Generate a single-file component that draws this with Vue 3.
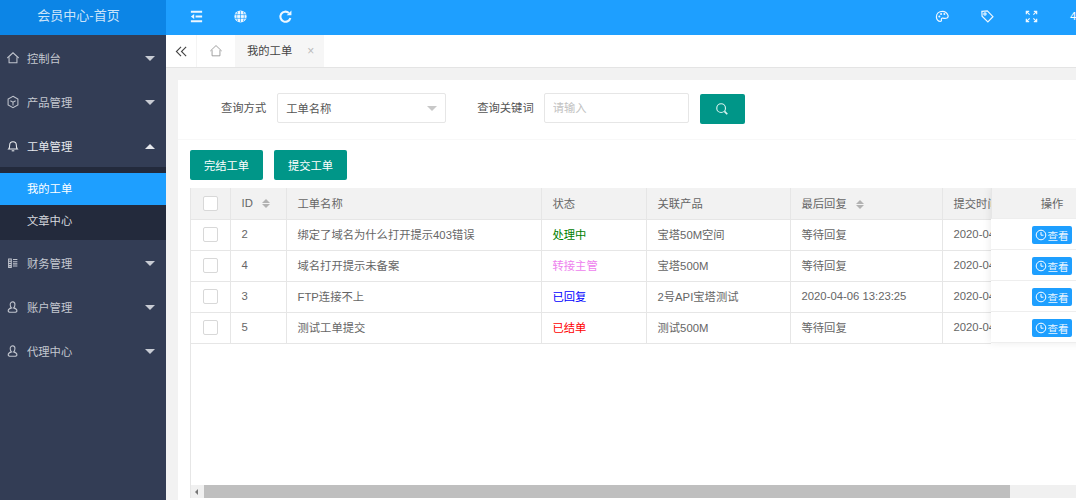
<template>
  <div class="app">
    <header class="topbar">
      <div class="logo">会员中心-首页</div>
      <div class="top-left">
        <span class="top-item">
          <svg class="top-icon" viewBox="0 0 16 16"><path d="M2 3h12M7 8h7M2 13h12" stroke-width="2.200" /><path d="M5.500 5.300 2 8l3.500 2.700z" class="solid" /></svg>
        </span>
        <span class="top-item">
          <svg class="top-icon" viewBox="0 0 16 16"><circle cx="8" cy="8" r="6.500" class="solid" /><path d="M2 6h12M2 10h12M8 2v12M5 3c-1.400 3-1.400 7 0 10M11 3c1.400 3 1.400 7 0 10" class="cut" /></svg>
        </span>
        <span class="top-item">
          <svg class="top-icon" viewBox="0 0 16 16"><path d="M13.200 9.500A5.400 5.400 0 1 1 11.600 4.200" stroke-width="2.200" /><path d="M9.300 6.700h5V1.700z" class="solid" /></svg>
        </span>
      </div>
      <div class="top-right">
        <span class="top-item">
          <svg class="top-icon" viewBox="0 0 16 16"><path d="M8 2.500C4 2.500 1.500 5.200 1.500 8.500c0 2.700 2 4.800 4 4.800 1.600 0 1.500-1.300 1.300-2.200-.2-1 .5-1.600 1.500-1.400 1.500.3 3 .6 4.600-.1 1.300-.6 1.300-2.200.7-3.400C12.600 4 10.600 2.500 8 2.500z" /><circle cx="4.600" cy="8" r="1.100" class="solid" /><circle cx="6.500" cy="5.300" r="1.100" class="solid" /><circle cx="10" cy="5.300" r="1.100" class="solid" /></svg>
        </span>
        <span class="top-item">
          <svg class="top-icon" viewBox="0 0 16 16"><path d="M2 2.500 7.800 2l6 6.200-5.400 5.600-6.200-6z" /><circle cx="5.300" cy="5.300" r="1.200" /></svg>
        </span>
        <span class="top-item">
          <svg class="top-icon" viewBox="0 0 16 16"><path d="M2.500 5.500v-3h3M10.500 2.500h3v3M13.500 10.500v3h-3M5.500 13.500h-3v-3M3 3l3 3M13 3l-3 3M13 13l-3-3M3 13l3-3" /></svg>
        </span>
        <span class="user-name">4</span>
      </div>
    </header>

    <div class="body-wrap">
      <aside class="sidebar">
        <template v-for="menu in menus" :key="menu.title">
          <div class="menu-item" :class="{ open: menu.children }">
            <svg class="menu-icon" viewBox="0 0 16 16"><path v-for="d in menu.icon" :key="d" :d="d" /></svg>
            <span class="menu-text">{{ menu.title }}</span>
            <i class="arrow" :class="{ up: menu.children }"></i>
          </div>
          <div v-if="menu.children" class="submenu">
            <div
              v-for="child in menu.children"
              :key="child.title"
              class="sub-item"
              :class="{ active: child.active }"
            >{{ child.title }}</div>
          </div>
        </template>
      </aside>

      <main class="main">
        <div class="tabs">
          <span class="tab-back">
            <svg viewBox="0 0 14 14"><path d="M6.500 2 1.500 7l5 5M12 2 7 7l5 5" /></svg>
          </span>
          <span class="tab-home">
            <svg viewBox="0 0 16 16"><path d="M1.500 8 8 1.800 14.500 8M3.500 7v6.500h9V7" /></svg>
          </span>
          <span class="tab-current">
            我的工单
            <span class="tab-close">×</span>
          </span>
        </div>

        <div class="content">
          <section class="card">
            <div class="search-form">
              <label class="form-label first">查询方式</label>
              <div class="select-box">
                <span>工单名称</span>
                <i class="select-arrow"></i>
              </div>
              <label class="form-label second">查询关键词</label>
              <input class="keyword" type="text" placeholder="请输入" />
              <button class="btn search-btn" type="button">
                <svg viewBox="0 0 16 16"><circle cx="7" cy="7" r="5" /><path d="M10.800 10.800 14 14" stroke-width="2" /></svg>
              </button>
            </div>

            <div class="toolbar">
              <button class="btn" type="button">完结工单</button>
              <button class="btn" type="button">提交工单</button>
            </div>

            <div class="table-box">
              <div class="table-area">
                <table class="grid">
                  <colgroup>
                    <col style="width: 39px" />
                    <col style="width: 56px" />
                    <col style="width: 255px" />
                    <col style="width: 105px" />
                    <col style="width: 144px" />
                    <col style="width: 152px" />
                    <col style="width: 49px" />
                  </colgroup>
                  <thead>
                    <tr>
                      <th class="check-cell"><span class="check"></span></th>
                      <th>ID<i class="sort"></i></th>
                      <th>工单名称</th>
                      <th>状态</th>
                      <th>关联产品</th>
                      <th>最后回复<i class="sort"></i></th>
                      <th class="clipped">提交时间</th>
                    </tr>
                  </thead>
                  <tbody>
                    <tr v-for="row in rows" :key="row.id">
                      <td class="check-cell"><span class="check"></span></td>
                      <td>{{ row.id }}</td>
                      <td>{{ row.name }}</td>
                      <td :class="row.statusClass">{{ row.status }}</td>
                      <td>{{ row.product }}</td>
                      <td>{{ row.reply }}</td>
                      <td class="clipped">{{ row.time }}</td>
                    </tr>
                  </tbody>
                </table>

                <div class="fixed-col">
                  <div class="fixed-head">操作</div>
                  <div v-for="row in rows" :key="row.id" class="fixed-row">
                    <button class="view-btn" type="button">
                      <svg viewBox="0 0 12 12"><circle cx="6" cy="6" r="4.800" /><path d="M6 3v3.200h2.500" /></svg>
                      查看
                    </button>
                  </div>
                </div>
              </div>

              <div class="scrollbar">
                <i class="scroll-left"></i>
                <div class="scroll-thumb"></div>
              </div>
            </div>
          </section>
        </div>
      </main>
    </div>
  </div>
</template>

<script setup>
const user = "M8 2a3.200 3.200 0 0 0-3.200 3.500c0 1.500.6 2.700 1.500 3.500-2 .6-3.800 1.600-3.800 3.200 0 1.300 1 1.800 2.500 1.800h5c1.500 0 2.500-.5 2.500-1.800 0-1.600-1.800-2.600-3.800-3.200.9-.8 1.500-2 1.500-3.500A3.200 3.200 0 0 0 8 2z";

const menus = [
  { title: "控制台", icon: ["M1.500 8 8 2l6.500 6", "M3.500 7v6.500h9V7"] },
  { title: "产品管理", icon: ["M8 1.500 13.600 4.700v6.600L8 14.500l-5.600-3.200V4.700z", "M5 6.500 8 8.300l3-1.800M8 8.300V12"] },
  {
    title: "工单管理",
    icon: ["M3 11.500c1-1 1.200-2 1.200-4.500a3.800 3.800 0 0 1 7.600 0c0 2.500.2 3.500 1.200 4.500z", "M6.500 13.500h3"],
    children: [{ title: "我的工单", active: true }, { title: "文章中心" }],
  },
  { title: "财务管理", icon: ["M3 3.500h3v9.500H3z", "M3 6h3M3 8.500h3M3 11h3", "M8 4h5M8 6.500h5M8 9h5M8 11.500h5"] },
  { title: "账户管理", icon: [user] },
  { title: "代理中心", icon: [user] },
];

const rows = [
  { id: 2, name: "绑定了域名为什么打开提示403错误", status: "处理中", statusClass: "st-green", product: "宝塔50M空间", reply: "等待回复", time: "2020-04-05" },
  { id: 4, name: "域名打开提示未备案", status: "转接主管", statusClass: "st-violet", product: "宝塔500M", reply: "等待回复", time: "2020-04-05" },
  { id: 3, name: "FTP连接不上", status: "已回复", statusClass: "st-blue", product: "2号API宝塔测试", reply: "2020-04-06 13:23:25", time: "2020-04-05" },
  { id: 5, name: "测试工单提交", status: "已结单", statusClass: "st-red", product: "测试500M", reply: "等待回复", time: "2020-04-06" },
];
</script>

<style>
html,
body {
  overflow: hidden;
  background: #f2f2f2;
}
</style>

<style scoped>
.app {
  width: 1135px;
  height: 500px;
  display: flex;
  flex-direction: column;
  font-family: "Liberation Sans", "Noto Sans CJK SC", sans-serif;
  font-size: 11.3px;
  color: #666;
}

.topbar {
  height: 35px;
  flex: none;
  display: flex;
  background: #1e9fff;
}

.logo {
  width: 166px;
  line-height: 32px;
  padding-right: 9px;
  box-sizing: border-box;
  text-align: center;
  font-size: 13px;
  color: rgba(255, 255, 255, 0.8);
  background: #0c85e6;
}

.top-left {
  display: flex;
  padding-left: 8px;
}

.top-right {
  display: flex;
  margin-left: auto;
}

.top-item {
  width: 44.5px;
  display: flex;
  align-items: center;
  justify-content: center;
  padding-bottom: 2px;
  box-sizing: border-box;
}

.top-icon {
  width: 15px;
  height: 15px;
  fill: none;
  stroke: #fff;
  stroke-width: 1.3;
  opacity: 0.92;
}

.top-icon .solid {
  fill: #fff;
  stroke: none;
}

.top-icon .cut {
  stroke: #1e9fff;
  stroke-width: 0.7;
}

.user-name {
  width: 81px;
  padding-left: 16px;
  box-sizing: border-box;
  line-height: 33px;
  color: #fff;
}

.body-wrap {
  flex: 1;
  min-height: 0;
  display: flex;
}

.sidebar {
  width: 166px;
  flex: none;
  background: #333d55;
  color: #c4c8d0;
}

.menu-item {
  height: 44px;
  display: flex;
  align-items: center;
  padding: 2px 11px 0 6px;
  box-sizing: border-box;
}

.menu-icon {
  width: 14px;
  height: 14px;
  margin-right: 7px;
  fill: none;
  stroke: #c0c4cd;
  stroke-width: 1.2;
}

.menu-item.open {
  color: #e6e8ec;
}

.menu-item.open .menu-icon {
  stroke: #eceef1;
}

.menu-text {
  flex: 1;
}

.arrow {
  width: 0;
  height: 0;
  border-left: 5px solid transparent;
  border-right: 5px solid transparent;
  border-top: 5px solid #c8ccd4;
}

.arrow.up {
  border-top: 0;
  border-bottom: 5px solid #e6e8ec;
}

.submenu {
  background: #232a3c;
  padding-top: 6px;
}

.sub-item {
  height: 32px;
  line-height: 32px;
  padding-left: 27px;
  color: #d6d9df;
}

.sub-item:last-child {
  height: 35px;
}

.sub-item.active {
  background: #1e9fff;
  color: #fff;
}

.main {
  flex: 1;
  min-width: 0;
  display: flex;
  flex-direction: column;
}

.tabs {
  height: 32px;
  flex: none;
  display: flex;
  background: #fff;
  border-bottom: 1px solid #e4e4e4;
}

.tab-back {
  width: 31px;
  display: flex;
  align-items: center;
  justify-content: center;
  border-right: 1px solid #f4f4f4;
  box-sizing: border-box;
}

.tab-back svg {
  width: 13px;
  height: 13px;
  fill: none;
  stroke: #444;
  stroke-width: 1.2;
}

.tab-home {
  width: 38px;
  display: flex;
  align-items: center;
  justify-content: center;
}

.tab-home svg {
  width: 14px;
  height: 14px;
  fill: none;
  stroke: #888;
  stroke-width: 0.9;
}

.tab-current {
  width: 89px;
  padding-left: 12px;
  box-sizing: border-box;
  line-height: 33px;
  background: #f6f6f6;
  color: #444;
}

.tab-close {
  margin-left: 12px;
  font-size: 12px;
  color: #bbb;
}

.content {
  flex: 1;
  min-height: 0;
  padding: 12px 12px 0;
  display: flex;
  background: #f2f2f2;
}

.card {
  flex: 1;
  min-width: 0;
  padding: 0 12px 2px;
  display: flex;
  flex-direction: column;
  background: #fff;
}

.search-form {
  height: 60px;
  flex: none;
  margin: 0 -12px;
  padding: 13px 12px 0;
  box-sizing: border-box;
  display: flex;
  align-items: flex-start;
  border-bottom: 1px solid #f8f8f8;
}

.form-label {
  line-height: 30px;
  color: #555;
}

.form-label.first {
  margin-left: 31px;
  margin-right: 11px;
}

.form-label.second {
  margin-left: 31px;
  margin-right: 10px;
}

.select-box {
  width: 169px;
  height: 30px;
  padding: 0 8px;
  box-sizing: border-box;
  display: flex;
  align-items: center;
  justify-content: space-between;
  border: 1px solid #e6e6e6;
  border-radius: 2px;
  color: #555;
}

.select-arrow {
  width: 0;
  height: 0;
  border-left: 5px solid transparent;
  border-right: 5px solid transparent;
  border-top: 5px solid #c8c8c8;
}

.keyword {
  width: 145px;
  height: 30px;
  padding: 0 8px;
  box-sizing: border-box;
  border: 1px solid #e6e6e6;
  border-radius: 2px;
  outline: none;
  font: inherit;
}

.keyword::placeholder {
  color: #c2c2c2;
}

.btn {
  height: 30px;
  padding: 0;
  width: 73px;
  border: none;
  border-radius: 2px;
  background: #009688;
  color: #fff;
  font: inherit;
}

.search-btn {
  width: 45px;
  margin-left: 11px;
  margin-top: 1px;
}

.search-btn svg {
  width: 14px;
  height: 14px;
  fill: none;
  stroke: #d8f2ef;
  stroke-width: 1.3;
  vertical-align: middle;
}

.toolbar {
  flex: none;
  display: flex;
  gap: 11px;
  padding: 10px 0 8px;
}

.table-box {
  flex: 1;
  min-height: 0;
  display: flex;
  flex-direction: column;
  border-left: 1px solid #e6e6e6;
}

.table-area {
  flex: 1;
  min-height: 0;
  position: relative;
  overflow: hidden;
}

.grid {
  width: 800px;
  table-layout: fixed;
  border-collapse: collapse;
}

.grid th,
.grid td {
  height: 31px;
  padding: 0 11px;
  box-sizing: border-box;
  border-right: 1px solid #e6e6e6;
  border-bottom: 1px solid #e6e6e6;
  text-align: left;
  white-space: nowrap;
  overflow: hidden;
  font-weight: normal;
}

.grid td {
  padding-bottom: 2px;
}

.grid th {
  background: #f2f2f2;
}

.grid .check-cell {
  padding: 0 0 0 12px;
}

.grid .clipped {
  padding-right: 0;
  border-right: 0;
}

.check {
  display: block;
  width: 15px;
  height: 15px;
  box-sizing: border-box;
  background: #fff;
  border: 1px solid #d8d8d8;
  border-radius: 2px;
}

.sort {
  display: inline-block;
  width: 8px;
  height: 9px;
  margin-left: 9px;
  vertical-align: -1px;
  position: relative;
}

.sort::before,
.sort::after {
  content: "";
  position: absolute;
  left: 0;
  border-left: 4px solid transparent;
  border-right: 4px solid transparent;
}

.sort::before {
  top: 0;
  border-bottom: 4px solid #b2b2b2;
}

.sort::after {
  bottom: 0;
  border-top: 4px solid #b2b2b2;
}

.st-green {
  color: #008000;
}

.st-violet {
  color: #ee82ee;
}

.st-blue {
  color: #0000ff;
}

.st-red {
  color: #ff0000;
}

.fixed-col {
  position: absolute;
  top: 0;
  left: 800px;
  width: 120px;
  background: #fff;
  box-shadow: -1px 0 8px rgba(0, 0, 0, 0.08);
}

.fixed-head,
.fixed-row {
  height: 31px;
  padding-left: 1px;
  box-sizing: border-box;
  display: flex;
  align-items: center;
  justify-content: center;
  border-bottom: 1px solid #eee;
}

.fixed-row {
  padding-top: 2px;
}

.fixed-head {
  background: #f2f2f2;
  border-left: 1px solid #e6e6e6;
}

.view-btn {
  width: 40px;
  height: 18px;
  padding: 0;
  display: flex;
  align-items: center;
  justify-content: center;
  gap: 1px;
  border: none;
  border-radius: 2px;
  background: #1e9fff;
  color: #e6f4ff;
  font: inherit;
  font-size: 10.5px;
}

.view-btn svg {
  width: 12px;
  height: 12px;
  fill: none;
  stroke: #fff;
  stroke-width: 1;
}

.scrollbar {
  height: 13px;
  flex: none;
  background: #f0f0f0;
  display: flex;
  align-items: stretch;
}

.scroll-left {
  width: 0;
  height: 0;
  align-self: center;
  margin-left: 4px;
  border-top: 3px solid transparent;
  border-bottom: 3px solid transparent;
  border-right: 3px solid #777;
}

.scroll-thumb {
  width: 806px;
  margin-left: 6px;
  background: #bfbfbf;
}
</style>
